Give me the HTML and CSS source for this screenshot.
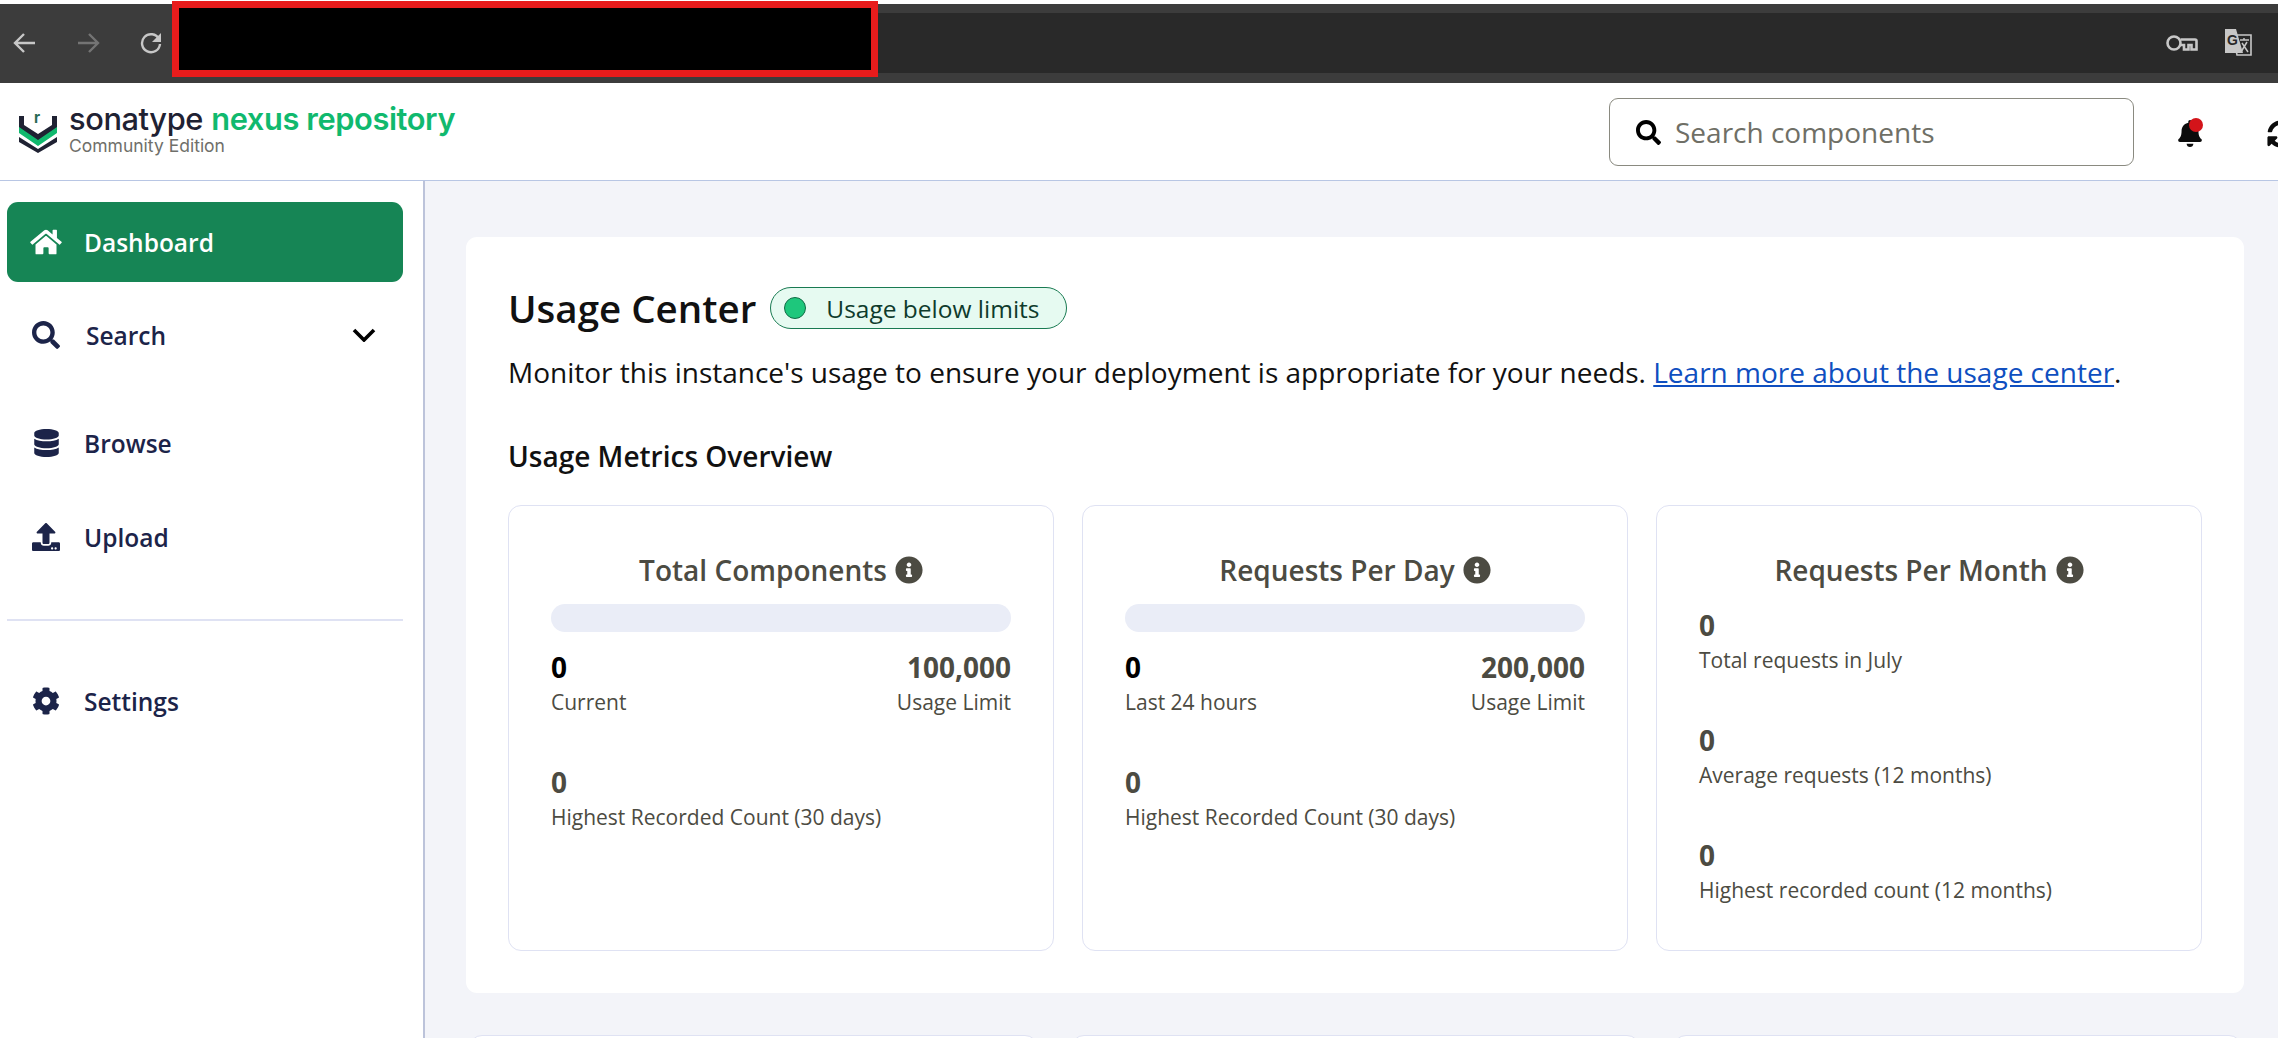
FILE: index.html
```html
<!DOCTYPE html>
<html lang="en">
<head>
<meta charset="utf-8">
<title>Sonatype Nexus Repository</title>
<link rel="stylesheet" href="styles.css">
</head>
<body>
<div class="browser">
  <div class="browser-nav">
    <svg class="bicon" viewBox="0 0 24 22"><path d="M22 11H3M11 2l-9 9 9 9"/></svg>
    <svg class="bicon dim" viewBox="0 0 24 22"><path d="M2 11h19M13 2l9 9-9 9"/></svg>
    <svg class="bicon" viewBox="0 0 24 22"><path d="M20 7a9 9 0 1 0 1 5"/><path class="fill" d="M22 1v9h-9z"/></svg>
  </div>
  <div class="address">
    <svg class="key" viewBox="0 0 32 18"><circle cx="8" cy="9" r="6.5"/><path d="M14.5 5.5H29a1.5 1.5 0 0 1 1.500 1.500V15.500h-5V11h-3v4.500h-4.500V11h-3.500"/></svg>
    <svg class="translate" viewBox="0 0 30 30"><path class="back" d="M10 7h18v20H14z"/><path class="front" d="M2 1h11l7 24H2z"/><text x="4" y="17" class="g">G</text><path class="zh" d="M17 12h9M21 10v2M18 24l6-10M19 15l6 9"/></svg>
  </div>
  <div class="redaction"></div>
</div>
<header class="topbar">
  <div class="logo">
    <svg class="logo-mark" viewBox="0 -6 38 46">
      <path class="dark" d="M0 3h5v9l14 9 14-9V3h5v12L19 28 0 15z"/>
      <path class="green" d="M0 14l19 13 19-13v6L19 33 0 20z"/>
      <path class="dark" d="M0 24l19 12 19-12v5L19 40 0 29z"/>
      <text x="15" y="10" class="r">r</text>
    </svg>
    <div class="logo-text">
      <div class="logo-name"><span class="sona">sonatype</span> <span class="nexus">nexus repository</span></div>
      <div class="logo-edition">Community Edition</div>
    </div>
  </div>
  <div class="top-actions">
    <div class="search-box">
      <svg class="search-icon" viewBox="0 0 512 512"><path d="M505 442.7L405.3 343c-4.5-4.5-10.6-7-17-7H372c27.6-35.3 44-79.7 44-128C416 93.1 322.9 0 208 0S0 93.1 0 208s93.1 208 208 208c48.3 0 92.7-16.4 128-44v16.3c0 6.4 2.5 12.5 7 17l99.7 99.7c9.4 9.4 24.6 9.4 33.9 0l28.3-28.3c9.4-9.4 9.4-24.6.1-34zM208 336c-70.7 0-128-57.2-128-128 0-70.7 57.2-128 128-128 70.7 0 128 57.2 128 128 0 70.7-57.2 128-128 128z"/></svg>
      <span>Search components</span>
    </div>
    <div class="bell">
      <svg viewBox="0 0 448 512"><path d="M224 512c35.32 0 63.97-28.65 63.97-64H160.03c0 35.35 28.65 64 63.97 64zm215.39-149.71c-19.32-20.76-55.47-51.99-55.47-154.29 0-77.7-54.48-139.9-127.94-155.16V32c0-17.67-14.32-32-31.98-32s-31.98 14.33-31.98 32v20.84C118.56 68.1 64.08 130.3 64.08 208c0 102.3-36.15 133.53-55.47 154.29-6 6.45-8.66 14.16-8.61 21.71.11 16.4 12.98 32 32.1 32h383.8c19.12 0 32-15.6 32.1-32 .05-7.55-2.61-15.27-8.61-21.71z"/></svg>
      <span class="badge"></span>
    </div>
    <svg class="refresh" viewBox="0 0 512 512"><path d="M370.72 133.28C339.458 104.008 298.888 87.962 255.848 88c-77.458.068-144.328 53.178-162.791 126.85-1.344 5.363-6.122 9.15-11.651 9.15H24.103c-7.498 0-13.194-6.807-11.807-14.176C33.933 94.924 134.813 8 256 8c66.448 0 126.791 26.136 171.315 68.685L463.03 40.97C478.149 25.851 504 36.559 504 57.941V192c0 13.255-10.745 24-24 24H345.941c-21.382 0-32.09-25.851-16.971-40.971l41.75-41.749zM32 296h134.059c21.382 0 32.09 25.851 16.971 40.971l-41.75 41.75c31.262 29.273 71.835 45.319 114.876 45.28 77.418-.07 144.315-53.144 162.787-126.849 1.344-5.363 6.122-9.15 11.651-9.15h57.304c7.498 0 13.194 6.807 11.807 14.176C478.067 417.076 377.187 504 256 504c-66.448 0-126.791-26.136-171.315-68.685L48.97 471.03C33.851 486.149 8 475.441 8 454.059V320c0-13.255 10.745-24 24-24z"/></svg>
  </div>
</header>
<div class="app">
  <nav class="sidebar">
    <a class="nav-item active">
      <span class="nav-icon"><svg class="i-home" viewBox="0 0 576 512"><path d="M280.37 148.26L96 300.11V464a16 16 0 0 0 16 16l112.06-.29a16 16 0 0 0 15.92-16V368a16 16 0 0 1 16-16h64a16 16 0 0 1 16 16v95.64a16 16 0 0 0 16 16.05L464 480a16 16 0 0 0 16-16V300L295.67 148.26a12.19 12.19 0 0 0-15.3 0zM571.6 251.47L488 182.56V44.05a12 12 0 0 0-12-12h-56a12 12 0 0 0-12 12v72.61L318.47 43a48 48 0 0 0-61 0L4.34 251.47a12 12 0 0 0-1.6 16.9l25.5 31A12 12 0 0 0 45.15 301l235.22-193.74a12.19 12.19 0 0 1 15.3 0L530.9 301a12 12 0 0 0 16.9-1.6l25.5-31a12 12 0 0 0-1.7-16.93z"/></svg></span>
      <span>Dashboard</span>
    </a>
    <a class="nav-item nav-search">
      <span class="nav-icon"><svg class="i-28" viewBox="0 0 512 512"><path d="M505 442.7L405.3 343c-4.5-4.5-10.6-7-17-7H372c27.6-35.3 44-79.7 44-128C416 93.1 322.9 0 208 0S0 93.1 0 208s93.1 208 208 208c48.3 0 92.7-16.4 128-44v16.3c0 6.4 2.5 12.5 7 17l99.7 99.7c9.4 9.4 24.6 9.4 33.9 0l28.3-28.3c9.4-9.4 9.4-24.6.1-34zM208 336c-70.7 0-128-57.2-128-128 0-70.7 57.2-128 128-128 70.7 0 128 57.2 128 128 0 70.7-57.2 128-128 128z"/></svg></span>
      <span>Search</span>
      <svg class="chevron" viewBox="0 0 24 14"><path d="M2 2l10 10L22 2"/></svg>
    </a>
    <a class="nav-item nav-browse">
      <span class="nav-icon"><svg class="i-db" viewBox="0 0 448 512"><path d="M448 73.143v45.714C448 159.143 347.667 192 224 192S0 159.143 0 118.857V73.143C0 32.857 100.333 0 224 0s224 32.857 224 73.143zM448 176v102.857C448 319.143 347.667 352 224 352S0 319.143 0 278.857V176c48.125 33.143 136.208 48.572 224 48.572S399.874 209.143 448 176zm0 160v102.857C448 479.143 347.667 512 224 512S0 479.143 0 438.857V336c48.125 33.143 136.208 48.572 224 48.572S399.874 369.143 448 336z"/></svg></span>
      <span>Browse</span>
    </a>
    <a class="nav-item nav-upload">
      <span class="nav-icon"><svg class="i-28" viewBox="0 0 512 512"><path d="M296 384h-80c-13.3 0-24-10.7-24-24V192h-87.7c-17.8 0-26.7-21.5-14.1-34.1L242.3 5.7c7.5-7.5 19.8-7.5 27.3 0l152.2 152.2c12.6 12.6 3.7 34.1-14.1 34.1H320v168c0 13.3-10.7 24-24 24zm216-8v112c0 13.3-10.7 24-24 24H24c-13.3 0-24-10.7-24-24V376c0-13.3 10.7-24 24-24h136v8c0 30.9 25.1 56 56 56h80c30.9 0 56-25.1 56-56v-8h136c13.3 0 24 10.7 24 24zm-124 88c0-11-9-20-20-20s-20 9-20 20 9 20 20 20 20-9 20-20zm64 0c0-11-9-20-20-20s-20 9-20 20 9 20 20 20 20-9 20-20z"/></svg></span>
      <span>Upload</span>
    </a>
    <hr class="nav-divider">
    <a class="nav-item">
      <span class="nav-icon"><svg class="i-28" viewBox="0 0 512 512"><path d="M487.4 315.7l-42.6-24.6c4.3-23.2 4.3-47 0-70.2l42.6-24.6c4.9-2.8 7.1-8.6 5.5-14-11.1-35.6-30-67.8-54.7-94.6-3.8-4.1-10-5.1-14.8-2.3L380.8 110c-17.9-15.4-38.5-27.3-60.8-35.1V25.8c0-5.6-3.9-10.5-9.4-11.7-36.7-8.2-74.3-7.8-109.2 0-5.5 1.2-9.4 6.1-9.4 11.7V75c-22.2 7.9-42.8 19.8-60.8 35.1L88.7 85.5c-4.9-2.8-11-1.9-14.8 2.3-24.7 26.7-43.6 58.9-54.7 94.6-1.7 5.4.6 11.2 5.5 14L67.3 221c-4.3 23.2-4.3 47 0 70.2l-42.6 24.6c-4.9 2.8-7.1 8.6-5.5 14 11.1 35.6 30 67.8 54.7 94.6 3.8 4.1 10 5.1 14.8 2.3l42.6-24.6c17.9 15.4 38.5 27.3 60.8 35.1v49.2c0 5.6 3.9 10.5 9.4 11.7 36.7 8.2 74.3 7.8 109.2 0 5.5-1.2 9.4-6.1 9.4-11.7v-49.2c22.2-7.9 42.8-19.8 60.8-35.1l42.6 24.6c4.9 2.8 11 1.9 14.8-2.3 24.7-26.7 43.6-58.9 54.7-94.6 1.5-5.5-.7-11.3-5.6-14.1zM256 336c-44.1 0-80-35.9-80-80s35.9-80 80-80 80 35.9 80 80-35.9 80-80 80z"/></svg></span>
      <span>Settings</span>
    </a>
  </nav>
  <main class="content">
    <section class="panel">
      <div class="panel-head">
        <h1>Usage Center</h1>
        <div class="pill"><span class="pill-dot"></span><span>Usage below limits</span></div>
      </div>
      <p class="desc">Monitor this instance's usage to ensure your deployment is appropriate for your needs. <a class="link">Learn more about the usage center</a>.</p>
      <h2>Usage Metrics Overview</h2>
      <div class="metrics">
        <article class="metric">
          <h3>Total Components <svg class="info" viewBox="0 0 512 512"><path d="M256 8C119 8 8 119.1 8 256c0 137 111 248 248 248s248-111 248-248C504 119.1 393 8 256 8zm0 110c23.2 0 42 18.8 42 42s-18.8 42-42 42-42-18.8-42-42 18.8-42 42-42zm56 254c0 6.6-5.4 12-12 12h-88c-6.6 0-12-5.4-12-12v-24c0-6.6 5.4-12 12-12h12v-64h-12c-6.6 0-12-5.4-12-12v-24c0-6.6 5.4-12 12-12h64c6.6 0 12 5.4 12 12v100h12c6.6 0 12 5.4 12 12v24z"/></svg></h3>
          <div class="bar"></div>
          <div class="split">
            <div><div class="val current">0</div><div class="lab">Current</div></div>
            <div class="right"><div class="val">100,000</div><div class="lab">Usage Limit</div></div>
          </div>
          <div class="stat"><div class="val">0</div><div class="lab">Highest Recorded Count (30 days)</div></div>
        </article>
        <article class="metric">
          <h3>Requests Per Day <svg class="info" viewBox="0 0 512 512"><path d="M256 8C119 8 8 119.1 8 256c0 137 111 248 248 248s248-111 248-248C504 119.1 393 8 256 8zm0 110c23.2 0 42 18.8 42 42s-18.8 42-42 42-42-18.8-42-42 18.8-42 42-42zm56 254c0 6.6-5.4 12-12 12h-88c-6.6 0-12-5.4-12-12v-24c0-6.6 5.4-12 12-12h12v-64h-12c-6.6 0-12-5.4-12-12v-24c0-6.6 5.4-12 12-12h64c6.6 0 12 5.4 12 12v100h12c6.6 0 12 5.4 12 12v24z"/></svg></h3>
          <div class="bar"></div>
          <div class="split">
            <div><div class="val current">0</div><div class="lab">Last 24 hours</div></div>
            <div class="right"><div class="val">200,000</div><div class="lab">Usage Limit</div></div>
          </div>
          <div class="stat"><div class="val">0</div><div class="lab">Highest Recorded Count (30 days)</div></div>
        </article>
        <article class="metric">
          <h3>Requests Per Month <svg class="info" viewBox="0 0 512 512"><path d="M256 8C119 8 8 119.1 8 256c0 137 111 248 248 248s248-111 248-248C504 119.1 393 8 256 8zm0 110c23.2 0 42 18.8 42 42s-18.8 42-42 42-42-18.8-42-42 18.8-42 42-42zm56 254c0 6.6-5.4 12-12 12h-88c-6.6 0-12-5.4-12-12v-24c0-6.6 5.4-12 12-12h12v-64h-12c-6.6 0-12-5.4-12-12v-24c0-6.6 5.4-12 12-12h64c6.6 0 12 5.4 12 12v100h12c6.6 0 12 5.4 12 12v24z"/></svg></h3>
          <div class="stack">
            <div><div class="val">0</div><div class="lab">Total requests in July</div></div>
            <div><div class="val">0</div><div class="lab">Average requests (12 months)</div></div>
            <div><div class="val">0</div><div class="lab">Highest recorded count (12 months)</div></div>
          </div>
        </article>
      </div>
    </section>
    <div class="lower">
      <div class="lower-card"></div>
      <div class="lower-card"></div>
      <div class="lower-card"></div>
    </div>
  </main>
</div>
</body>
</html>
```

FILE: styles.css
```css
* { box-sizing: border-box; }
html, body { height: 100%; margin: 0; }
body {
  display: flex;
  flex-direction: column;
  overflow: hidden;
  background: #fff;
  font-family: "Open Sans", "Noto Sans", sans-serif;
}

/* browser chrome */
.browser {
  position: relative;
  flex: none;
  height: 79px;
  margin-top: 4px;
  display: flex;
  background: #3c3c3c;
  padding: 9px 0 10px;
}
.browser-nav {
  width: 172px;
  display: flex;
  gap: 39px;
  padding: 19px 0 0 13px;
}
.bicon {
  width: 24px;
  height: 22px;
  fill: none;
  stroke: #c7c7c7;
  stroke-width: 2.4;
}
.bicon.dim { stroke: #747474; }
.bicon .fill { fill: #c7c7c7; stroke: none; }
.address {
  flex: 1;
  background: #292929;
  display: flex;
  align-items: center;
  justify-content: flex-end;
  gap: 25px;
  padding-right: 25px;
}
.key {
  width: 32px;
  height: 18px;
  fill: none;
  stroke: #c7c7c7;
  stroke-width: 2.6;
}
.translate { width: 30px; height: 30px; }
.translate .back { fill: #292929; stroke: #c7c7c7; stroke-width: 1.6; }
.translate .front { fill: #c7c7c7; }
.translate .g { font: bold 14px "Liberation Sans", sans-serif; fill: #292929; }
.translate .zh { fill: none; stroke: #c7c7c7; stroke-width: 1.5; }
.redaction {
  position: absolute;
  left: 172px;
  top: -3px;
  width: 706px;
  height: 76px;
  background: #000;
  border: 7px solid #e81c1c;
}

/* top bar */
.topbar {
  flex: none;
  height: 98px;
  display: flex;
  justify-content: space-between;
  border-bottom: 1px solid #b8c6e4;
  background: #fff;
  overflow: hidden;
}
.logo {
  display: flex;
  flex: none;
  gap: 12px;
  padding: 24px 0 0 19px;
}
.logo-mark { width: 38px; height: 46px; flex: none; }
.logo-mark .dark { fill: #1f2233; }
.logo-mark .green { fill: #10b96e; }
.logo-mark .r { font: bold 15px "Inter", sans-serif; fill: #2a6b55; }
.logo-text { margin-top: -6px; }
.logo-name {
  font-family: "Inter", sans-serif;
  font-size: 30.8px;
  line-height: 36px;
  letter-spacing: -0.4px;
  white-space: nowrap;
}
.sona { color: #1f2233; font-weight: 500; }
.nexus { color: #10b96e; font-weight: 600; }
.logo-edition {
  font-family: "Inter", sans-serif;
  font-size: 17.5px;
  line-height: 18px;
  color: #6f6f6a;
}
.top-actions {
  display: flex;
  flex: none;
  align-items: flex-start;
  padding-top: 15px;
  margin-right: -17px;
}
.search-box {
  width: 525px;
  height: 68px;
  border: 1px solid #8a8a80;
  border-radius: 9px;
  display: flex;
  align-items: center;
  gap: 14px;
  padding-left: 26px;
  font-size: 28px;
  color: #6f6f66;
}
.search-icon { width: 25px; height: 25px; fill: #000; }
.bell { position: relative; width: 24px; height: 29px; margin: 20px 0 0 44px; }
.bell svg { display: block; width: 24px; height: 27px; margin-top: 2px; fill: #0c0c0c; }
.badge {
  position: absolute;
  left: 11px;
  top: 0;
  width: 14px;
  height: 14px;
  border-radius: 50%;
  background: #d3141a;
}
.refresh { width: 28px; height: 28px; margin: 22px 0 0 65px; flex: none; fill: #0c0c0c; }

/* layout */
.app { flex: 1; display: flex; min-height: 0; }
.sidebar {
  flex: none;
  width: 425px;
  padding: 21px 20px 0 7px;
  border-right: 2px solid #bcc3da;
  background: #fff;
}
.nav-item {
  height: 80px;
  display: flex;
  align-items: center;
  padding-left: 23px;
  font-size: 24.5px;
  font-weight: 600;
  color: #1c2449;
}
.nav-item.active { background: #168555; color: #fff; border-radius: 11px; }
.nav-icon { width: 32px; margin-right: 22px; display: flex; justify-content: center; }
.nav-icon svg { display: block; fill: currentColor; }
.i-home { width: 32px; height: 28px; }
.i-28 { width: 28px; height: 28px; }
.i-db { width: 25px; height: 28px; }
.nav-search { margin-top: 13px; position: relative; }
.nav-search .nav-icon { margin-right: 24px; }
.chevron {
  margin-left: auto;
  margin-right: 27px;
  width: 24px;
  height: 14px;
  fill: none;
  stroke: #000;
  stroke-width: 3.6;
}
.nav-browse { margin-top: 28px; }
.nav-upload { margin-top: 14px; }
.nav-divider { height: 2px; border: 0; margin: 42px 0 40px; background: #dfe2f3; }

.content {
  flex: 1;
  min-width: 0;
  background: #f3f4f9;
  padding: 56px 34px 0 41px;
  overflow: hidden;
}
.panel {
  height: 756px;
  background: #fff;
  border-radius: 11px;
  padding: 43px 42px 0;
}
.panel-head { display: flex; align-items: center; gap: 14px; height: 56px; }
h1 { margin: 0; font-size: 38.5px; font-weight: 600; color: #111; line-height: 56px; }
.pill {
  height: 42px;
  width: 297px;
  display: flex;
  align-items: center;
  gap: 20px;
  padding-left: 13px;
  border: 1px solid #197a52;
  border-radius: 21px;
  background: #e6faf1;
  font-size: 24.5px;
  color: #0e3b2c;
}
.pill-dot {
  width: 22px;
  height: 22px;
  border-radius: 50%;
  background: #1ec77c;
  border: 1px solid #0f6b45;
}
.desc { margin: 16px 0 0; font-size: 28px; line-height: 40px; color: #111; }
.link { color: #0f4fc0; text-decoration: underline; }
h2 { margin: 46px 0 0; font-size: 28px; line-height: 36px; font-weight: 600; color: #111; }
.metrics {
  margin-top: 31px;
  display: grid;
  grid-template-columns: repeat(3, 546px);
  gap: 28px;
}
.metric {
  height: 446px;
  border: 1px solid #dfe2f3;
  border-radius: 13px;
  padding: 45px 42px 0;
  color: #4c4b42;
}
h3 {
  margin: 0;
  height: 38px;
  display: flex;
  align-items: center;
  justify-content: center;
  gap: 8px;
  font-size: 28px;
  font-weight: 600;
  white-space: nowrap;
}
.info { width: 28px; height: 28px; fill: #4c4b42; flex: none; }
.bar { height: 28px; margin-top: 15px; border-radius: 14px; background: #eaedf7; }
.split { display: flex; justify-content: space-between; margin-top: 17px; }
.right { text-align: right; }
.val { font-size: 28px; line-height: 36px; font-weight: 700; }
.val.current { color: #000; }
.lab { font-size: 21px; line-height: 34px; }
.stat { margin-top: 45px; }
.stack { margin-top: 18px; display: flex; flex-direction: column; gap: 45px; }
.lower {
  margin: 42px 2px 0 3px;
  display: grid;
  grid-template-columns: repeat(3, 1fr);
  gap: 33px;
}
.lower-card {
  height: 200px;
  background: #fff;
  border: 1px solid #dfe2f3;
  border-radius: 13px;
}
```
